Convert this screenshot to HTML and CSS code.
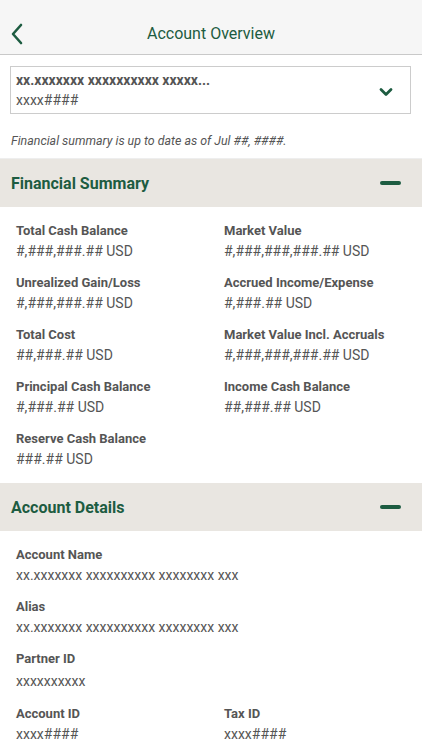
FILE: index.html
```html
<!DOCTYPE html>
<html>
<head>
<meta charset="utf-8">
<link rel="stylesheet" href="styles.css">
</head>
<body>
<header class="topbar">
  <svg class="back" width="14" height="22" viewBox="0 0 14 22"><path d="M11 2 L3 11 L11 20" fill="none" stroke="#1d5c41" stroke-width="2.6" stroke-linecap="round" stroke-linejoin="round"/></svg>
  <h1 class="title">Account Overview</h1>
</header>
<div class="picker">
  <div class="picker-text">
    <div class="picker-name">xx.xxxxxxx xxxxxxxxxx xxxxx...</div>
    <div class="picker-id">xxxx####</div>
  </div>
  <svg class="chev" width="14" height="10" viewBox="0 0 14 10"><path d="M2 2.5 L7 7.5 L12 2.5" fill="none" stroke="#1d5c41" stroke-width="2.8" stroke-linecap="round" stroke-linejoin="round"/></svg>
</div>
<p class="note">Financial summary is up to date as of Jul ##, ####.</p>
<section>
  <div class="sec-head"><h2>Financial Summary</h2><span class="minus"></span></div>
  <div class="grid first">
    <div class="field"><div class="lbl">Total Cash Balance</div><div class="val">#,###,###.## USD</div></div>
    <div class="field"><div class="lbl">Market Value</div><div class="val">#,###,###,###.## USD</div></div>
    <div class="field"><div class="lbl">Unrealized Gain/Loss</div><div class="val">#,###,###.## USD</div></div>
    <div class="field"><div class="lbl">Accrued Income/Expense</div><div class="val">#,###.## USD</div></div>
    <div class="field"><div class="lbl">Total Cost</div><div class="val">##,###.## USD</div></div>
    <div class="field"><div class="lbl">Market Value Incl. Accruals</div><div class="val">#,###,###,###.## USD</div></div>
    <div class="field"><div class="lbl">Principal Cash Balance</div><div class="val">#,###.## USD</div></div>
    <div class="field"><div class="lbl">Income Cash Balance</div><div class="val">##,###.## USD</div></div>
    <div class="field"><div class="lbl">Reserve Cash Balance</div><div class="val">###.## USD</div></div>
  </div>
</section>
<section>
  <div class="sec-head"><h2>Account Details</h2><span class="minus"></span></div>
  <div class="grid">
    <div class="field wide"><div class="lbl">Account Name</div><div class="val">xx.xxxxxxx xxxxxxxxxx xxxxxxxx xxx</div></div>
    <div class="field wide"><div class="lbl">Alias</div><div class="val">xx.xxxxxxx xxxxxxxxxx xxxxxxxx xxx</div></div>
    <div class="field wide"><div class="lbl">Partner ID</div><div class="val tall">xxxxxxxxxx</div></div>
    <div class="field"><div class="lbl">Account ID</div><div class="val">xxxx####</div></div>
    <div class="field"><div class="lbl">Tax ID</div><div class="val">xxxx####</div></div>
  </div>
</section>
</body>
</html>
```
FILE: styles.css
```css
* { box-sizing: border-box; }
body {
  margin: 0;
  background: #ffffff;
  font-family: Roboto, "Liberation Sans", sans-serif;
  color: #555555;
}
.topbar {
  position: relative;
  height: 55px;
  padding-top: 13px;
  background: #f6f6f6;
  border-bottom: 1px solid #c9c9c9;
}
.back {
  position: absolute;
  left: 10px;
  top: 23px;
}
.title {
  margin: 0;
  height: 42px;
  line-height: 42px;
  text-align: center;
  font-size: 16px;
  font-weight: 400;
  color: #1d5c41;
}
.picker {
  margin: 11px 11px 0 10px;
  height: 48px;
  border: 1px solid #cccccc;
  display: flex;
  align-items: center;
  padding: 3px 17px 3px 5px;
}
.picker-text { flex: 1; }
.picker-name {
  font-size: 14px;
  font-weight: 700;
  line-height: 20px;
  color: #555;
}
.picker-id {
  font-size: 14px;
  line-height: 21px;
  color: #555;
}
.chev { margin-top: 4px; }
.note {
  margin: 0;
  padding: 19px 11px 0;
  height: 45px;
  font-size: 12.4px;
  font-style: italic;
  line-height: 16px;
  color: #555;
  border-bottom: 1px solid #eeeeee;
}
.sec-head {
  height: 48px;
  background: #e9e6e1;
  display: flex;
  align-items: center;
  justify-content: space-between;
  padding: 0 21px 0 11px;
}
.sec-head h2 {
  margin: 0;
  font-size: 16px;
  font-weight: 700;
  color: #1d5c41;
}
.minus {
  width: 21px;
  height: 4px;
  border-radius: 2px;
  background: #1d5c41;
}
.grid {
  display: grid;
  grid-template-columns: 208px 1fr;
  row-gap: 11px;
  padding: 14px 16px 14px 16px;
}
.grid.first { padding-bottom: 13px; }
.field.wide { grid-column: 1 / -1; }
.lbl {
  font-size: 13px;
  font-weight: 700;
  line-height: 20px;
  color: #555;
}
.val {
  font-size: 14px;
  line-height: 21px;
  color: #555;
}
.val.tall { line-height: 24px; }
```
